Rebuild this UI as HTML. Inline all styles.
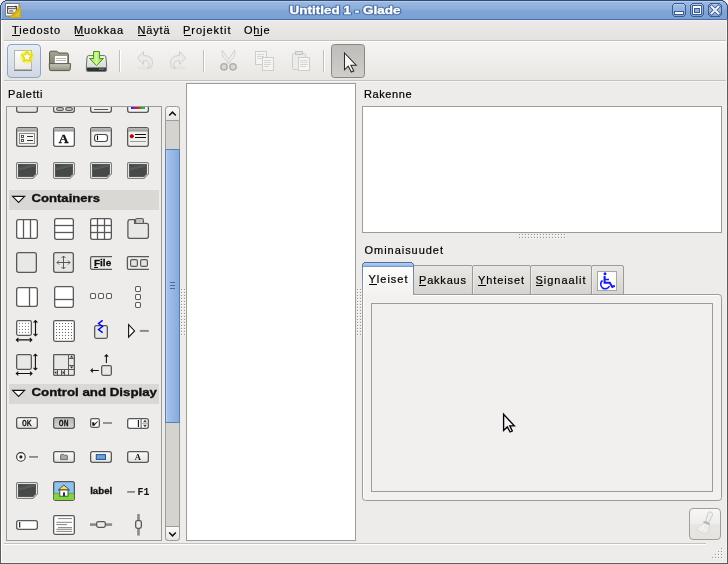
<!DOCTYPE html>
<html><head><meta charset="utf-8">
<style>
html,body{margin:0;padding:0;width:728px;height:564px;overflow:hidden;background:#f6f2ec;}
svg{display:block;will-change:transform;}
svg{font-family:"Liberation Sans",sans-serif;}
</style></head><body>
<svg width="728" height="564" viewBox="0 0 728 564" shape-rendering="crispEdges">
<defs>
<linearGradient id="gTitle" x1="0" y1="0" x2="0" y2="1">
<stop offset="0" stop-color="#9cbae4"/><stop offset="0.45" stop-color="#8cadda"/><stop offset="0.55" stop-color="#80a4d5"/><stop offset="1" stop-color="#79a0d5"/>
</linearGradient>
<linearGradient id="gMenu" x1="0" y1="0" x2="0" y2="1">
<stop offset="0" stop-color="#ebeae8"/><stop offset="1" stop-color="#e3e2df"/>
</linearGradient>
<linearGradient id="gTool" x1="0" y1="0" x2="0" y2="1">
<stop offset="0" stop-color="#f5f4f2"/><stop offset="1" stop-color="#e8e7e4"/>
</linearGradient>
<linearGradient id="gTab" x1="0" y1="0" x2="0" y2="1">
<stop offset="0" stop-color="#e9e8e5"/><stop offset="1" stop-color="#d5d4d0"/>
</linearGradient>
<linearGradient id="gSlider" x1="0" y1="0" x2="1" y2="0">
<stop offset="0" stop-color="#a9c5ea"/><stop offset="1" stop-color="#84aadc"/>
</linearGradient>
<linearGradient id="gBtn" x1="0" y1="0" x2="0" y2="1">
<stop offset="0" stop-color="#fbfbfa"/><stop offset="1" stop-color="#e6e5e2"/>
</linearGradient>
</defs>
<!-- window bg -->
<rect x="0" y="20" width="728" height="544" fill="#edecea"/>
<!-- title bar -->
<path d="M5,0 H723 L728,5 V20 H0 V5 Z" fill="url(#gTitle)"/>
<rect x="5" y="0" width="718" height="1" fill="#34496c"/>
<rect x="3" y="1" width="2" height="1" fill="#34496c"/><rect x="723" y="1" width="2" height="1" fill="#34496c"/>
<rect x="2" y="2" width="1" height="1" fill="#34496c"/><rect x="725" y="2" width="1" height="1" fill="#34496c"/>
<rect x="1" y="3" width="1" height="2" fill="#34496c"/><rect x="726" y="3" width="1" height="2" fill="#34496c"/>
<rect x="0" y="5" width="1" height="15" fill="#34496c"/><rect x="727" y="5" width="1" height="15" fill="#34496c"/>
<rect x="5" y="1" width="718" height="1" fill="#b4ccef"/>
<rect x="1" y="5" width="1" height="14" fill="#a9c3ea"/>
<rect x="0" y="19" width="728" height="1" fill="#4a72a8"/>

<!-- window side borders -->
<rect x="0" y="20" width="1" height="544" fill="#5e5c59"/>
<rect x="1" y="20" width="1" height="543" fill="#ffffff"/>
<rect x="727" y="20" width="1" height="544" fill="#5e5c59"/>
<rect x="726" y="20" width="1" height="543" fill="#f4f3f1"/>
<rect x="0" y="563" width="728" height="1" fill="#5e5c59"/>
<rect x="1" y="562" width="726" height="1" fill="#f4f3f1"/>
<!-- menubar -->
<rect x="2" y="20" width="724" height="1" fill="#f3efee"/>
<rect x="4" y="21" width="722" height="19" fill="url(#gMenu)"/>
<rect x="4" y="40" width="722" height="1" fill="#c4c2bf"/>
<rect x="4" y="41" width="722" height="1" fill="#ffffff"/>
<g font-size="11" fill="#000" stroke="#000" stroke-width="0.2">
<text x="12.0" y="34" textLength="48.0" lengthAdjust="spacing">Tiedosto</text>
<text x="74.0" y="34" textLength="49.0" lengthAdjust="spacing">Muokkaa</text>
<text x="137.5" y="34" textLength="32.0" lengthAdjust="spacing">Näytä</text>
<text x="183.0" y="34" textLength="47.5" lengthAdjust="spacing">Projektit</text>
<text x="244.0" y="34" textLength="25.5" lengthAdjust="spacing">Ohje</text>
</g>
<!-- toolbar -->
<rect x="4" y="42" width="722" height="38" fill="url(#gTool)"/>
<rect x="4" y="80" width="722" height="1" fill="#c4c2bf"/>
<rect x="4" y="81" width="722" height="1" fill="#f6f5f3"/>
<!-- labels -->
<g font-size="11" fill="#000" stroke="#000" stroke-width="0.2">
<text x="8.0" y="98" textLength="34.5" lengthAdjust="spacing">Paletti</text>
<text x="364.0" y="98" textLength="47.5" lengthAdjust="spacing">Rakenne</text>
<text x="364.5" y="254" textLength="78.5" lengthAdjust="spacing">Ominaisuudet</text>
</g>
<!-- palette frame -->
<rect x="6.5" y="106.5" width="155" height="434" fill="none" stroke="#9d9b98" stroke-width="1"/>
<!-- scrollbar -->
<rect x="165.5" y="106.5" width="14" height="434" rx="3" fill="#d4d3d0" stroke="#9d9b98" shape-rendering="auto"/>
<!-- design area -->
<rect x="186.5" y="83.5" width="169" height="457" fill="#ffffff" stroke="#9d9b98"/>
<!-- tree view -->
<rect x="362.5" y="106.5" width="359" height="126" fill="#ffffff" stroke="#9d9b98"/>
<!-- notebook page -->
<rect x="362.5" y="294.5" width="359" height="206" rx="3" fill="#f2f1ef" stroke="#9d9b98" shape-rendering="auto"/><rect x="363" y="296" width="1" height="202" fill="#ffffff"/>
<rect x="371.5" y="303.5" width="341" height="188" fill="#f1f0ee" stroke="#9d9b98"/>
<!-- broom button -->

<!-- statusbar -->
<rect x="4" y="543" width="702" height="1" fill="#c4c2bf"/>
<rect x="4" y="544" width="702" height="1" fill="#ffffff"/>

<!-- toolbar buttons -->
<g shape-rendering="auto">
<!-- new (prelight) -->
<linearGradient id="gPre" x1="0" y1="0" x2="0" y2="1"><stop offset="0" stop-color="#e9edf2"/><stop offset="1" stop-color="#d1d8e2"/></linearGradient>
<linearGradient id="gPage" x1="0" y1="0" x2="0" y2="1"><stop offset="0" stop-color="#ffffff"/><stop offset="1" stop-color="#e9e9e7"/></linearGradient>
<radialGradient id="gGlow"><stop offset="0.5" stop-color="#f2ee3a"/><stop offset="1" stop-color="#f2ee3a" stop-opacity="0"/></radialGradient>
<rect x="7.5" y="44.5" width="33" height="33" rx="3.5" fill="url(#gPre)" stroke="#8ca5c9"/>
<rect x="14" y="69.5" width="18" height="1.5" fill="#6a6a68" opacity="0.8"/>
<rect x="14.5" y="50.5" width="17" height="19" fill="url(#gPage)" stroke="#b4b4b0"/>
<circle cx="27" cy="56.8" r="8" fill="url(#gGlow)"/>
<path d="M27.00,51.20 L28.53,54.70 L32.33,55.07 L29.47,57.60 L30.29,61.33 L27.00,59.40 L23.71,61.33 L24.53,57.60 L21.67,55.07 L25.47,54.70 Z" fill="#ffffff" stroke="#e6d200" stroke-width="1.2" stroke-linejoin="round"/>
<!-- open -->
<linearGradient id="gFolB" x1="0" y1="0" x2="0" y2="1"><stop offset="0" stop-color="#a2a390"/><stop offset="1" stop-color="#787968"/></linearGradient>
<linearGradient id="gFolF" x1="0" y1="0" x2="0" y2="1"><stop offset="0" stop-color="#c9cab9"/><stop offset="1" stop-color="#8f907d"/></linearGradient>
<path d="M49.5,69 V52.8 Q49.5,51.2 51,51.2 H56.4 Q57.4,51.2 58,52 L58.6,53 H66.8 Q68.4,53 68.4,54.6 V69 Z" fill="url(#gFolB)" stroke="#5b5c4f"/>
<rect x="54.5" y="55.5" width="13" height="9" fill="#fdfdfc" stroke="#8a8a86" stroke-width="0.8"/>
<path d="M56,58.5h10M56,60.5h10" stroke="#b8b8b4" stroke-width="1"/>
<path d="M49.2,63.6 H70.6 L70.2,69.4 Q70,70.6 68.8,70.6 H50.8 Q49.6,70.6 49.5,69.4 Z" fill="url(#gFolF)" stroke="#5b5c4f"/>
<!-- save -->
<linearGradient id="gDrv" x1="0" y1="0" x2="0" y2="1"><stop offset="0" stop-color="#f6f6f4"/><stop offset="1" stop-color="#cfcfcb"/></linearGradient>
<linearGradient id="gArr" x1="0" y1="0" x2="1" y2="0"><stop offset="0" stop-color="#8ae234"/><stop offset="0.5" stop-color="#d2f6a8"/><stop offset="1" stop-color="#73d216"/></linearGradient>
<path d="M88.6,55.6 H104.4 Q105.6,55.6 105.9,57 L106.6,65 V70.2 Q106.6,71.4 105.4,71.4 H87.6 Q86.4,71.4 86.4,70.2 V65 L87.1,57 Q87.4,55.6 88.6,55.6 Z" fill="url(#gDrv)" stroke="#6c6e6a"/>
<path d="M87,67.4 H106 V70 Q106,70.9 105.1,70.9 H87.9 Q87,70.9 87,70 Z" fill="#2e3436"/>
<rect x="99" y="68.6" width="5.5" height="1" fill="#8a8c88"/>
<path d="M93.5,51.5 H99.5 V58.5 H103.5 L96.5,65.6 L89.5,58.5 H93.5 Z" fill="url(#gArr)" stroke="#4e9a06"/>
<!-- separators -->
<rect x="119" y="50" width="1" height="22" fill="#c0bfbc"/><rect x="120" y="50" width="1" height="22" fill="#ffffff"/>
<rect x="203" y="50" width="1" height="22" fill="#c0bfbc"/><rect x="204" y="50" width="1" height="22" fill="#ffffff"/>
<rect x="323" y="50" width="1" height="22" fill="#c0bfbc"/><rect x="324" y="50" width="1" height="22" fill="#ffffff"/>
<!-- undo -->
<ellipse cx="145" cy="68" rx="8" ry="2" fill="#e6e5e2"/>
<path d="M137.5,58 L143.5,51.5 V55.5 Q152.5,55.5 152.5,62.5 Q152.5,67.5 147.5,68.5 Q150,66 149,63 Q148,60.5 143.5,60.5 V64.5 Z" fill="#ebebe8" stroke="#cfcfca"/>
<!-- redo -->
<ellipse cx="178" cy="68" rx="8" ry="2" fill="#e6e5e2"/>
<path d="M185.5,58 L179.5,51.5 V55.5 Q170.5,55.5 170.5,62.5 Q170.5,67.5 175.5,68.5 Q173,66 174,63 Q175,60.5 179.5,60.5 V64.5 Z" fill="#ebebe8" stroke="#cfcfca"/>
<!-- cut -->
<path d="M222.3,50.3 Q221.2,54 223.5,57.5 L229.2,63.5 L230.2,62 Z" fill="#efefed" stroke="#c9c9c5" stroke-width="0.8"/>
<path d="M234.7,50.3 Q235.8,54 233.5,57.5 L227.8,63.5 L226.8,62 Z" fill="#efefed" stroke="#c9c9c5" stroke-width="0.8"/>
<circle cx="224" cy="66.8" r="3.1" fill="none" stroke="#b2acaa" stroke-width="1.5"/>
<circle cx="233" cy="66.8" r="3.1" fill="none" stroke="#b2acaa" stroke-width="1.5"/>
<circle cx="224" cy="66.8" r="1.3" fill="none" stroke="#bdb8b6" stroke-width="0.7"/>
<circle cx="233" cy="66.8" r="1.3" fill="none" stroke="#bdb8b6" stroke-width="0.7"/>
<!-- copy -->
<rect x="255.5" y="51.5" width="11" height="13" fill="#f4f4f2" stroke="#cdcdc9"/>
<rect x="262.5" y="57.5" width="11" height="13" fill="#f4f4f2" stroke="#cdcdc9"/>
<path d="M257,54.5h7M257,56.5h7M257,58.5h5M264,60.5h7M264,62.5h7M264,64.5h7M264,66.5h5" stroke="#d6d6d2" stroke-width="1"/>
<!-- paste -->
<rect x="292.5" y="53.5" width="13" height="16" rx="1" fill="#ececea" stroke="#cdcdc9"/>
<rect x="295.5" y="51.5" width="7" height="3" fill="#e2e2df" stroke="#c5c5c1"/>
<rect x="298.5" y="57.5" width="11" height="13" fill="#f6f6f4" stroke="#cdcdc9"/>
<path d="M300,60.5h8M300,62.5h8M300,64.5h8M300,66.5h6" stroke="#d6d6d2" stroke-width="1"/>
<!-- pointer (active) -->
<linearGradient id="gPtr" x1="0" y1="0" x2="0" y2="1"><stop offset="0" stop-color="#bebcb8"/><stop offset="1" stop-color="#d0cec9"/></linearGradient>
<rect x="331.5" y="44.5" width="33" height="33" rx="3" fill="url(#gPtr)" stroke="#8a8884"/>
<path d="M344.5,53 V69.8 L348.3,66.2 L351.3,72 L353.8,70.9 L350.9,65.2 L356.2,65.2 Z" fill="#f8f8f8" stroke="#2a2a2a" stroke-width="1.05" stroke-linejoin="miter"/>
</g>

<!-- title icon -->
<g shape-rendering="auto">
<rect x="5.5" y="3.5" width="13.5" height="12.5" fill="#ffffff" stroke="#7d7d7a"/>
<rect x="7.6" y="6.6" width="9" height="6.6" fill="none" stroke="#4a4a48" stroke-width="1.1"/>
<rect x="7.6" y="8.2" width="9" height="1" fill="#4a4a48"/>
<path d="M15.5,5.2 L17.3,6.6 L15.5,8" fill="#4a4a48"/>
<rect x="9.2" y="10.2" width="4" height="1.5" fill="#777"/>
<path d="M9.2,17.6 L20.6,17.6 L20.6,5.8 Z" fill="#d4ac16" stroke="#c69d08" stroke-width="0.7"/>
<path d="M13.8,16.2 L19.3,16.2 L19.3,10.5 Z" fill="#e3c02c"/>
<path d="M11.2,16.9 H19.9 V8" fill="none" stroke="#f4dc70" stroke-width="0.7" stroke-dasharray="1.2,1.6"/>
</g>
<!-- title text -->
<g font-size="11" font-weight="bold">
<text x="289.5" y="14" textLength="111" lengthAdjust="spacingAndGlyphs" fill="none" stroke="#3d5f94" stroke-width="2.4" stroke-linejoin="round" opacity="0.75">Untitled 1 - Glade</text>
<text x="289.5" y="14" textLength="111" lengthAdjust="spacingAndGlyphs" fill="#ffffff" stroke="#ffffff" stroke-width="0.3">Untitled 1 - Glade</text>
</g>
<!-- wm buttons -->
<linearGradient id="gWm" x1="0" y1="0" x2="0" y2="1"><stop offset="0" stop-color="#a4bfe8"/><stop offset="1" stop-color="#82a6da"/></linearGradient>
<rect x="673" y="4" width="12" height="12" fill="url(#gWm)"/><rect x="674" y="3" width="10" height="1" fill="#3d5d90"/><rect x="674" y="16" width="10" height="1" fill="#3d5d90"/><rect x="672" y="5" width="1" height="10" fill="#3d5d90"/><rect x="685" y="5" width="1" height="10" fill="#3d5d90"/><rect x="673" y="4" width="1" height="1" fill="#3d5d90"/><rect x="684" y="4" width="1" height="1" fill="#3d5d90"/><rect x="673" y="15" width="1" height="1" fill="#3d5d90"/><rect x="684" y="15" width="1" height="1" fill="#3d5d90"/><rect x="674" y="4" width="10" height="1" fill="#b9d0f0" opacity="0.8"/><rect x="674" y="11" width="10" height="4" fill="#3d5d90"/><rect x="675" y="12" width="8" height="2" fill="#ffffff"/><rect x="691" y="4" width="12" height="12" fill="url(#gWm)"/><rect x="692" y="3" width="10" height="1" fill="#3d5d90"/><rect x="692" y="16" width="10" height="1" fill="#3d5d90"/><rect x="690" y="5" width="1" height="10" fill="#3d5d90"/><rect x="703" y="5" width="1" height="10" fill="#3d5d90"/><rect x="691" y="4" width="1" height="1" fill="#3d5d90"/><rect x="702" y="4" width="1" height="1" fill="#3d5d90"/><rect x="691" y="15" width="1" height="1" fill="#3d5d90"/><rect x="702" y="15" width="1" height="1" fill="#3d5d90"/><rect x="692" y="4" width="10" height="1" fill="#b9d0f0" opacity="0.8"/><rect x="692" y="5" width="10" height="10" fill="#3d5d90"/><rect x="693" y="6" width="8" height="8" fill="#ffffff"/><rect x="694" y="8" width="6" height="5" fill="#3d5d90"/><rect x="695" y="9" width="4" height="3" fill="#8fb0de"/><rect x="709" y="4" width="12" height="12" fill="url(#gWm)"/><rect x="710" y="3" width="10" height="1" fill="#3d5d90"/><rect x="710" y="16" width="10" height="1" fill="#3d5d90"/><rect x="708" y="5" width="1" height="10" fill="#3d5d90"/><rect x="721" y="5" width="1" height="10" fill="#3d5d90"/><rect x="709" y="4" width="1" height="1" fill="#3d5d90"/><rect x="720" y="4" width="1" height="1" fill="#3d5d90"/><rect x="709" y="15" width="1" height="1" fill="#3d5d90"/><rect x="720" y="15" width="1" height="1" fill="#3d5d90"/><rect x="710" y="4" width="10" height="1" fill="#b9d0f0" opacity="0.8"/><g shape-rendering="auto"><path d="M711.5,6.5 L718.5,13.5 M718.5,6.5 L711.5,13.5" stroke="#3d5d90" stroke-width="3.6" stroke-linecap="square"/><path d="M711.5,6.5 L718.5,13.5 M718.5,6.5 L711.5,13.5" stroke="#ffffff" stroke-width="1.9" stroke-linecap="square"/><rect x="714" y="9" width="2" height="2" fill="#dde6f4"/></g>

<!--PALETTE--><g shape-rendering="geometricPrecision">
<clipPath id="clipPal"><rect x="7" y="107" width="154" height="433"/></clipPath>
<g clip-path="url(#clipPal)">
<rect x="16.65" y="92.65" width="20.7" height="19.7" rx="2" fill="#e6e6e4" stroke="#595959" stroke-width="1.3"/>
<rect x="53.65" y="92.65" width="20.7" height="19.7" rx="2" fill="#f0f0ee" stroke="#595959" stroke-width="1.3"/>
<rect x="56.6" y="107.6" width="6.8" height="2.8" rx="2" fill="#e6e6e4" stroke="#595959" stroke-width="1.2"/>
<rect x="65.6" y="107.6" width="6.8" height="2.8" rx="2" fill="#e6e6e4" stroke="#595959" stroke-width="1.2"/>
<rect x="90.65" y="92.65" width="20.7" height="19.7" rx="2" fill="#f0f0ee" stroke="#595959" stroke-width="1.3"/>
<path d="M94,109.5 L108,109.5" stroke="#555" stroke-width="1" fill="none"/>
<rect x="127.65" y="92.65" width="20.7" height="19.7" rx="2" fill="#f0f0ee" stroke="#595959" stroke-width="1.3"/>
<linearGradient id="gRain" x1="0" x2="1"><stop offset="0" stop-color="#2020e0"/><stop offset="0.3" stop-color="#a020a0"/><stop offset="0.55" stop-color="#e02020"/><stop offset="0.8" stop-color="#20c020"/><stop offset="1" stop-color="#20a0a0"/></linearGradient>
<rect x="131" y="107" width="14" height="2" fill="url(#gRain)"/>
<rect x="16.65" y="127.65" width="20.7" height="18.7" rx="2" fill="#f0f0ee" stroke="#595959" stroke-width="1.3"/><rect x="17.2" y="128.2" width="19.6" height="2.6" fill="#b0b0ae"/><path d="M16.8,131 L37.2,131" stroke="#777" stroke-width="0.8" fill="none"/>
<rect x="19.5" y="133.5" width="15" height="10" rx="0" fill="#f6f6f4" stroke="#8a8a88" stroke-width="1"/>
<rect x="21.5" y="135.5" width="2" height="2" fill="#fff" stroke="#444" stroke-width="0.9"/>
<rect x="21.5" y="139.5" width="2" height="2" fill="#fff" stroke="#444" stroke-width="0.9"/>
<path d="M27,136.5 L33,136.5" stroke="#333" stroke-width="1" fill="none"/>
<path d="M27,140.5 L33,140.5" stroke="#333" stroke-width="1" fill="none"/>
<rect x="53.65" y="127.65" width="20.7" height="18.7" rx="2" fill="#ffffff" stroke="#595959" stroke-width="1.3"/><rect x="54.2" y="128.2" width="19.6" height="2.6" fill="#b0b0ae"/><path d="M53.8,131 L74.2,131" stroke="#777" stroke-width="0.8" fill="none"/>
<text x="63.6" y="143.2" font-family="Liberation Serif" font-weight="bold" font-size="13.5" text-anchor="middle" fill="#111" stroke="#111" stroke-width="0.3">A</text>
<rect x="90.65" y="127.65" width="20.7" height="18.7" rx="2" fill="#f0f0ee" stroke="#595959" stroke-width="1.3"/><rect x="91.2" y="128.2" width="19.6" height="2.6" fill="#b0b0ae"/><path d="M90.8,131 L111.2,131" stroke="#777" stroke-width="0.8" fill="none"/>
<rect x="94.55" y="134.55" width="12.9" height="6.9" rx="2.5" fill="#fff" stroke="#444" stroke-width="1.1"/>
<path d="M97.5,135.5 L97.5,140.2" stroke="#111" stroke-width="1.1" fill="none"/>
<rect x="127.65" y="127.65" width="20.7" height="18.7" rx="2" fill="#f0f0ee" stroke="#595959" stroke-width="1.3"/><rect x="128.2" y="128.2" width="19.6" height="2.6" fill="#b0b0ae"/><path d="M127.8,131 L148.2,131" stroke="#777" stroke-width="0.8" fill="none"/>
<circle cx="131.8" cy="136.2" r="1.8" fill="#c00000" stroke="#800" stroke-width="0.5"/>
<path d="M135,134.5 L146,134.5" stroke="#111" stroke-width="1" fill="none"/>
<path d="M135,137.5 L146,137.5" stroke="#111" stroke-width="1" fill="none"/>
<path d="M130,141.5 L146,141.5" stroke="#999" stroke-width="1" fill="none"/>
<rect x="16.6" y="162.6" width="20.8" height="15.8" rx="1.2" fill="#fff" stroke="#7e7e7b" stroke-width="1.2"/><linearGradient id="gImg16162" x1="0" y1="0" x2="0.35" y2="1"><stop offset="0" stop-color="#3a3d3d"/><stop offset="0.42" stop-color="#5a5e5e"/><stop offset="0.47" stop-color="#474948"/><stop offset="1" stop-color="#474947"/></linearGradient><rect x="18.4" y="164.4" width="17.2" height="12.2" fill="url(#gImg16162)" stroke="#3a3a3a" stroke-width="0.7"/><path d="M38.2,173.4 L32.6,179.2 L38.2,179.2 Z" fill="#edecea"/><path d="M37.6,174 L33.2,178.4 Q33.4,174.4 37.6,174 Z" fill="#cfcfc8" stroke="#8a8a86" stroke-width="0.8"/>
<rect x="53.6" y="162.6" width="20.8" height="15.8" rx="1.2" fill="#fff" stroke="#7e7e7b" stroke-width="1.2"/><linearGradient id="gImg53162" x1="0" y1="0" x2="0.35" y2="1"><stop offset="0" stop-color="#3a3d3d"/><stop offset="0.42" stop-color="#5a5e5e"/><stop offset="0.47" stop-color="#474948"/><stop offset="1" stop-color="#474947"/></linearGradient><rect x="55.4" y="164.4" width="17.2" height="12.2" fill="url(#gImg53162)" stroke="#3a3a3a" stroke-width="0.7"/><path d="M75.2,173.4 L69.6,179.2 L75.2,179.2 Z" fill="#edecea"/><path d="M74.6,174 L70.2,178.4 Q70.4,174.4 74.6,174 Z" fill="#cfcfc8" stroke="#8a8a86" stroke-width="0.8"/>
<rect x="90.6" y="162.6" width="20.8" height="15.8" rx="1.2" fill="#fff" stroke="#7e7e7b" stroke-width="1.2"/><linearGradient id="gImg90162" x1="0" y1="0" x2="0.35" y2="1"><stop offset="0" stop-color="#3a3d3d"/><stop offset="0.42" stop-color="#5a5e5e"/><stop offset="0.47" stop-color="#474948"/><stop offset="1" stop-color="#474947"/></linearGradient><rect x="92.4" y="164.4" width="17.2" height="12.2" fill="url(#gImg90162)" stroke="#3a3a3a" stroke-width="0.7"/><path d="M112.2,173.4 L106.6,179.2 L112.2,179.2 Z" fill="#edecea"/><path d="M111.6,174 L107.2,178.4 Q107.4,174.4 111.6,174 Z" fill="#cfcfc8" stroke="#8a8a86" stroke-width="0.8"/>
<rect x="127.6" y="162.6" width="20.8" height="15.8" rx="1.2" fill="#fff" stroke="#7e7e7b" stroke-width="1.2"/><linearGradient id="gImg127162" x1="0" y1="0" x2="0.35" y2="1"><stop offset="0" stop-color="#3a3d3d"/><stop offset="0.42" stop-color="#5a5e5e"/><stop offset="0.47" stop-color="#474948"/><stop offset="1" stop-color="#474947"/></linearGradient><rect x="129.4" y="164.4" width="17.2" height="12.2" fill="url(#gImg127162)" stroke="#3a3a3a" stroke-width="0.7"/><path d="M149.2,173.4 L143.6,179.2 L149.2,179.2 Z" fill="#edecea"/><path d="M148.6,174 L144.2,178.4 Q144.4,174.4 148.6,174 Z" fill="#cfcfc8" stroke="#8a8a86" stroke-width="0.8"/>
<rect x="9" y="190" width="150" height="20" fill="#d9d8d5" shape-rendering="crispEdges"/><path d="M12.6,196.4 H24.6 L18.6,202.4 Z" fill="#fff" stroke="#111" stroke-width="1.1"/><text x="31.5" y="202" font-size="11" font-weight="bold" fill="#111" stroke="#111" stroke-width="0.35" textLength="68.5" lengthAdjust="spacingAndGlyphs">Containers</text>
<rect x="9" y="384" width="150" height="20" fill="#d9d8d5" shape-rendering="crispEdges"/><path d="M12.6,390.4 H24.6 L18.6,396.4 Z" fill="#fff" stroke="#111" stroke-width="1.1"/><text x="31.5" y="396" font-size="11" font-weight="bold" fill="#111" stroke="#111" stroke-width="0.35" textLength="125.5" lengthAdjust="spacingAndGlyphs">Control and Display</text>
<rect x="16.65" y="219.65" width="20.7" height="18.7" rx="2" fill="#fff" stroke="#595959" stroke-width="1.3"/>
<path d="M23.5,219.5 L23.5,238.5" stroke="#595959" stroke-width="1.3" fill="none"/>
<path d="M30.5,219.5 L30.5,238.5" stroke="#595959" stroke-width="1.3" fill="none"/>
<rect x="54.65" y="218.65" width="18.7" height="20.7" rx="2" fill="#fff" stroke="#595959" stroke-width="1.3"/>
<path d="M54.5,225.5 L73.5,225.5" stroke="#595959" stroke-width="1.3" fill="none"/>
<path d="M54.5,232.5 L73.5,232.5" stroke="#595959" stroke-width="1.3" fill="none"/>
<rect x="90.65" y="218.65" width="20.7" height="20.7" rx="2" fill="#fff" stroke="#595959" stroke-width="1.3"/>
<path d="M97.5,218.5 L97.5,239.5" stroke="#595959" stroke-width="1.3" fill="none"/>
<path d="M104.5,218.5 L104.5,239.5" stroke="#595959" stroke-width="1.3" fill="none"/>
<path d="M90.5,225.5 L111.5,225.5" stroke="#595959" stroke-width="1.3" fill="none"/>
<path d="M90.5,232.5 L111.5,232.5" stroke="#595959" stroke-width="1.3" fill="none"/>
<path d="M127.9,222.4 Q127.9,219.6 130,219.6 H134.6 V223.4 H146.5 Q148.4,223.4 148.4,225.4 V236.6 Q148.4,238.4 146.5,238.4 H129.8 Q127.9,238.4 127.9,236.6 Z" fill="#e8e8e6" stroke="#595959" stroke-width="1.3"/>
<rect x="135.55" y="218.55" width="7.9" height="4.9" rx="1.5" fill="#c4c4c2" stroke="#595959" stroke-width="1.1"/>
<rect x="16.65" y="252.65" width="19.7" height="19.7" rx="2" fill="#e8e8e6" stroke="#595959" stroke-width="1.3"/>
<rect x="53.65" y="252.65" width="19.7" height="19.7" rx="2" fill="#e6e6e4" stroke="#595959" stroke-width="1.3"/>
<g stroke="#595959" stroke-width="1" fill="none"><path d="M57,262.5 H70 M63.5,256 V269"/><path d="M59,260.5 L57,262.5 L59,264.5 M68,260.5 L70,262.5 L68,264.5 M61.5,258 L63.5,256 L65.5,258 M61.5,267 L63.5,269 L65.5,267"/></g>
<path d="M112,256.6 H92 Q90.6,256.6 90.6,258 V268 Q90.6,269.4 92,269.4 H112" fill="none" stroke="#595959" stroke-width="1.3"/>
<text x="94" y="266" font-size="9.6" font-weight="bold" fill="#111" stroke="#111" stroke-width="0.3" textLength="17.2" lengthAdjust="spacingAndGlyphs">File</text>
<path d="M94,267.5 L98,267.5" stroke="#111" stroke-width="1" fill="none"/>
<path d="M149,256.6 H128.6 Q127.4,256.6 127.4,258 V268 Q127.4,269.4 128.6,269.4 H149" fill="none" stroke="#595959" stroke-width="1.3"/>
<rect x="130.6" y="259.6" width="6.8" height="6.8" rx="1.5" fill="#e4e4e2" stroke="#595959" stroke-width="1.2"/>
<rect x="140.6" y="259.6" width="6.8" height="6.8" rx="1.5" fill="#e4e4e2" stroke="#595959" stroke-width="1.2"/>
<rect x="16.65" y="287.65" width="20.7" height="18.7" rx="2" fill="#fff" stroke="#595959" stroke-width="1.3"/>
<path d="M29.5,287.5 L29.5,306.5" stroke="#595959" stroke-width="1.3" fill="none"/>
<rect x="54.65" y="286.65" width="18.7" height="20.7" rx="2" fill="#fff" stroke="#595959" stroke-width="1.3"/>
<path d="M54.5,299.5 L73.5,299.5" stroke="#595959" stroke-width="1.3" fill="none"/>
<rect x="90.55" y="293.55" width="4.9" height="4.9" rx="1.2" fill="#fff" stroke="#595959" stroke-width="1.1"/>
<rect x="98.55" y="293.55" width="4.9" height="4.9" rx="1.2" fill="#fff" stroke="#595959" stroke-width="1.1"/>
<rect x="106.55" y="293.55" width="4.9" height="4.9" rx="1.2" fill="#fff" stroke="#595959" stroke-width="1.1"/>
<rect x="135.55" y="286.55" width="4.9" height="4.9" rx="1.2" fill="#fff" stroke="#595959" stroke-width="1.1"/>
<rect x="135.55" y="294.55" width="4.9" height="4.9" rx="1.2" fill="#fff" stroke="#595959" stroke-width="1.1"/>
<rect x="135.55" y="302.55" width="4.9" height="4.9" rx="1.2" fill="#fff" stroke="#595959" stroke-width="1.1"/>
<rect x="16.65" y="320.65" width="14.7" height="14.7" rx="1.5" fill="#fff" stroke="#595959" stroke-width="1.3"/>
<rect x="18.9" y="322.9" width="1" height="1" fill="#666"/>
<rect x="18.9" y="325.9" width="1" height="1" fill="#666"/>
<rect x="18.9" y="328.9" width="1" height="1" fill="#666"/>
<rect x="18.9" y="331.9" width="1" height="1" fill="#666"/>
<rect x="21.9" y="322.9" width="1" height="1" fill="#666"/>
<rect x="21.9" y="325.9" width="1" height="1" fill="#666"/>
<rect x="21.9" y="328.9" width="1" height="1" fill="#666"/>
<rect x="21.9" y="331.9" width="1" height="1" fill="#666"/>
<rect x="24.9" y="322.9" width="1" height="1" fill="#666"/>
<rect x="24.9" y="325.9" width="1" height="1" fill="#666"/>
<rect x="24.9" y="328.9" width="1" height="1" fill="#666"/>
<rect x="24.9" y="331.9" width="1" height="1" fill="#666"/>
<rect x="27.9" y="322.9" width="1" height="1" fill="#666"/>
<rect x="27.9" y="325.9" width="1" height="1" fill="#666"/>
<rect x="27.9" y="328.9" width="1" height="1" fill="#666"/>
<rect x="27.9" y="331.9" width="1" height="1" fill="#666"/>
<g stroke="#111" stroke-width="1.1" fill="none"><path d="M35.5,320.6 V335.8 M33.6,322.6 L35.5,320.6 L37.4,322.6 M33.6,333.8 L35.5,335.8 L37.4,333.8"/><path d="M16.4,339.9 H31.8 M18.4,338 L16.4,339.9 L18.4,341.8 M29.8,338 L31.8,339.9 L29.8,341.8"/></g>
<rect x="53.65" y="320.65" width="20.7" height="20.7" rx="1.5" fill="#fff" stroke="#595959" stroke-width="1.3"/>
<rect x="56" y="323" width="1" height="1" fill="#666"/>
<rect x="56" y="326" width="1" height="1" fill="#666"/>
<rect x="56" y="329" width="1" height="1" fill="#666"/>
<rect x="56" y="332" width="1" height="1" fill="#666"/>
<rect x="56" y="335" width="1" height="1" fill="#666"/>
<rect x="56" y="338" width="1" height="1" fill="#666"/>
<rect x="59" y="323" width="1" height="1" fill="#666"/>
<rect x="59" y="326" width="1" height="1" fill="#666"/>
<rect x="59" y="329" width="1" height="1" fill="#666"/>
<rect x="59" y="332" width="1" height="1" fill="#666"/>
<rect x="59" y="335" width="1" height="1" fill="#666"/>
<rect x="59" y="338" width="1" height="1" fill="#666"/>
<rect x="62" y="323" width="1" height="1" fill="#666"/>
<rect x="62" y="326" width="1" height="1" fill="#666"/>
<rect x="62" y="329" width="1" height="1" fill="#666"/>
<rect x="62" y="332" width="1" height="1" fill="#666"/>
<rect x="62" y="335" width="1" height="1" fill="#666"/>
<rect x="62" y="338" width="1" height="1" fill="#666"/>
<rect x="65" y="323" width="1" height="1" fill="#666"/>
<rect x="65" y="326" width="1" height="1" fill="#666"/>
<rect x="65" y="329" width="1" height="1" fill="#666"/>
<rect x="65" y="332" width="1" height="1" fill="#666"/>
<rect x="65" y="335" width="1" height="1" fill="#666"/>
<rect x="65" y="338" width="1" height="1" fill="#666"/>
<rect x="68" y="323" width="1" height="1" fill="#666"/>
<rect x="68" y="326" width="1" height="1" fill="#666"/>
<rect x="68" y="329" width="1" height="1" fill="#666"/>
<rect x="68" y="332" width="1" height="1" fill="#666"/>
<rect x="68" y="335" width="1" height="1" fill="#666"/>
<rect x="68" y="338" width="1" height="1" fill="#666"/>
<rect x="71" y="323" width="1" height="1" fill="#666"/>
<rect x="71" y="326" width="1" height="1" fill="#666"/>
<rect x="71" y="329" width="1" height="1" fill="#666"/>
<rect x="71" y="332" width="1" height="1" fill="#666"/>
<rect x="71" y="335" width="1" height="1" fill="#666"/>
<rect x="71" y="338" width="1" height="1" fill="#666"/>
<rect x="94.65" y="325.65" width="12.7" height="12.7" rx="1.5" fill="#e8e8e6" stroke="#595959" stroke-width="1.3"/>
<path d="M102.6,320.4 L98.5,323.5 L102.5,326.5 L98.5,329.5 L102.6,332.6" fill="none" stroke="#0000f0" stroke-width="1.4" stroke-linejoin="miter"/>
<path d="M128.6,324.6 L134.6,330.9 L128.6,337.2 Z" fill="#fff" stroke="#111" stroke-width="1.1"/>
<path d="M139.8,330.9 L148.8,330.9" stroke="#8a8a88" stroke-width="2" fill="none"/>
<rect x="16.65" y="354.65" width="14.7" height="14.7" rx="1.5" fill="#e8e8e6" stroke="#595959" stroke-width="1.3"/>
<g stroke="#111" stroke-width="1.1" fill="none"><path d="M35.4,354.2 V369.8 M33.5,356.2 L35.4,354.2 L37.3,356.2 M33.5,367.8 L35.4,369.8 L37.3,367.8"/><path d="M16.3,373.5 H32 M18.3,371.6 L16.3,373.5 L18.3,375.4 M30,371.6 L32,373.5 L30,375.4"/></g>
<rect x="53.65" y="354.65" width="20.7" height="20.7" rx="0.8" fill="#e8e8e6" stroke="#595959" stroke-width="1.3"/>
<g stroke="#595959" stroke-width="1" fill="none" shape-rendering="crispEdges"><path d="M68.5,354.5 V375.5 M53.5,369.5 H74.5 M68.5,358.5 H74.5 M68.5,365.5 H74.5 M57.5,369.5 V375.5 M61.5,369.5 V375.5 M64.5,369.5 V375.5"/></g>
<g fill="#222"><path d="M70,357.6 L71.6,355.6 L73.2,357.6 Z"/><path d="M70,366.6 L71.6,368.6 L73.2,366.6 Z"/><path d="M56.4,371 L54.6,372.6 L56.4,374.2 Z"/><path d="M62.6,371 L64.4,372.6 L62.6,374.2 Z"/></g>
<rect x="101.65" y="365.65" width="9.7" height="9.7" rx="1.5" fill="#e8e8e6" stroke="#595959" stroke-width="1.3"/>
<g stroke="#111" stroke-width="1.1" fill="none"><path d="M106.4,354.8 V363 M104.6,356.6 L106.4,354.8 L108.2,356.6"/><path d="M91,370.5 H98.8 M92.8,368.7 L91,370.5 L92.8,372.3"/></g>
<linearGradient id="gBt" x1="0" y1="0" x2="0" y2="1"><stop offset="0" stop-color="#fcfcfb"/><stop offset="1" stop-color="#e2e2e0"/></linearGradient>
<linearGradient id="gBtOn" x1="0" y1="0" x2="0" y2="1"><stop offset="0" stop-color="#b8b8b6"/><stop offset="1" stop-color="#d6d6d4"/></linearGradient>
<rect x="16.65" y="417.65" width="20.7" height="10.7" rx="2" fill="url(#gBt)" stroke="#595959" stroke-width="1.3"/>
<text x="22" y="425.8" font-family="Liberation Mono" font-size="9" fill="#111" stroke="#111" stroke-width="0.35" textLength="9.6" lengthAdjust="spacingAndGlyphs">OK</text>
<rect x="53.65" y="417.65" width="20.7" height="10.7" rx="2" fill="url(#gBtOn)" stroke="#595959" stroke-width="1.3"/>
<text x="58.8" y="425.8" font-family="Liberation Mono" font-size="9" fill="#111" stroke="#111" stroke-width="0.35" textLength="9.7" lengthAdjust="spacingAndGlyphs">ON</text>
<rect x="90.65" y="418.65" width="8.7" height="8.7" rx="1.5" fill="#fff" stroke="#595959" stroke-width="1.3"/>
<path d="M92.2,422.2 L94.2,422.2 L94.3,423.9 L97.6,421 L97.9,421.6 L94.3,425.8 L92.4,425.8 Z" fill="#111"/>
<path d="M103,423 L112,423" stroke="#8a8a86" stroke-width="1.8" fill="none"/>
<rect x="127.65" y="418.65" width="20.7" height="9.7" rx="2" fill="#fff" stroke="#595959" stroke-width="1.3"/>
<path d="M141.1,418.5 L141.1,428.5" stroke="#595959" stroke-width="1" fill="none"/>
<path d="M138.4,420 L138.4,427" stroke="#111" stroke-width="1.1" fill="none"/>
<path d="M141.5,423.5 L148.5,423.5" stroke="#999" stroke-width="0.7" fill="none"/>
<g fill="#444"><path d="M143,422.2 L145,419.8 L147,422.2 Z"/><path d="M143,424.8 L145,427.2 L147,424.8 Z"/></g>
<circle cx="20.9" cy="456.9" r="4.3" fill="#fff" stroke="#333" stroke-width="1.1"/>
<circle cx="20.9" cy="456.9" r="1.6" fill="#222"/>
<path d="M29.1,456.9 L38,456.9" stroke="#8a8a88" stroke-width="1.8" fill="none"/>
<rect x="53.65" y="451.65" width="20.7" height="10.7" rx="2" fill="url(#gBt)" stroke="#595959" stroke-width="1.3"/>
<path d="M60.6,455.2 Q60.6,454.4 61.4,454.4 H63.6 L64.4,455.2 H66.6 Q67.4,455.2 67.4,456 V459.6 H60.6 Z" fill="#a9a9a7" stroke="#555" stroke-width="0.8"/>
<rect x="90.65" y="451.65" width="20.7" height="10.7" rx="2" fill="url(#gBt)" stroke="#595959" stroke-width="1.3"/>
<rect x="96.3" y="454.6" width="9.2" height="4.8" fill="#729fcf" stroke="#2050a0" stroke-width="1"/>
<rect x="127.65" y="451.65" width="20.7" height="10.7" rx="2" fill="url(#gBt)" stroke="#595959" stroke-width="1.3"/>
<text x="137.8" y="460" font-family="Liberation Serif" font-weight="bold" font-size="8.5" text-anchor="middle" fill="#111">A</text>
<rect x="16.6" y="482.6" width="20.8" height="15.8" rx="1.2" fill="#fff" stroke="#7e7e7b" stroke-width="1.2"/><linearGradient id="gImg16482" x1="0" y1="0" x2="0.35" y2="1"><stop offset="0" stop-color="#3a3d3d"/><stop offset="0.42" stop-color="#5a5e5e"/><stop offset="0.47" stop-color="#474948"/><stop offset="1" stop-color="#474947"/></linearGradient><rect x="18.4" y="484.4" width="17.2" height="12.2" fill="url(#gImg16482)" stroke="#3a3a3a" stroke-width="0.7"/><path d="M38.2,493.4 L32.6,499.2 L38.2,499.2 Z" fill="#edecea"/><path d="M37.6,494 L33.2,498.4 Q33.4,494.4 37.6,494 Z" fill="#cfcfc8" stroke="#8a8a86" stroke-width="0.8"/>
<rect x="53.65" y="481.65" width="20.7" height="18.7" rx="2" fill="#8ec4f4" stroke="#595959" stroke-width="1.3"/>
<rect x="53.8" y="493.4" width="20.2" height="6.6" fill="#7fd63c"/>
<path d="M53.7,493.4 L74.1,493.4" stroke="#4a8a2a" stroke-width="0.6" fill="none"/>
<path d="M58.2,490 L63.9,485 L69.6,490 Z" fill="#f2e050" stroke="#444" stroke-width="0.9"/>
<rect x="59.8" y="490" width="8.2" height="6.2" fill="#fff" stroke="#444" stroke-width="0.9"/>
<rect x="63" y="492.4" width="2" height="3.8" fill="#333"/>
<text x="90.2" y="494.3" font-size="9.5" font-weight="bold" fill="#111" stroke="#111" stroke-width="0.3" textLength="22" lengthAdjust="spacingAndGlyphs">label</text>
<path d="M127.2,491.9 L135,491.9" stroke="#8a8a88" stroke-width="1.8" fill="none"/>
<text x="137.6" y="494.6" font-family="Liberation Mono" font-size="10.5" font-weight="bold" fill="#111" textLength="11.8" lengthAdjust="spacingAndGlyphs">F1</text>
<rect x="16.65" y="520.65" width="20.7" height="8.7" rx="2" fill="#fff" stroke="#595959" stroke-width="1.3"/>
<path d="M19.7,522 L19.7,527.6" stroke="#111" stroke-width="1.1" fill="none"/>
<rect x="53.65" y="515.65" width="20.7" height="18.7" rx="1.5" fill="#fff" stroke="#595959" stroke-width="1.3"/>
<path d="M58,518.6 L72,518.6" stroke="#777" stroke-width="0.9" fill="none"/>
<path d="M56.3,522.3 L72,522.3" stroke="#777" stroke-width="0.9" fill="none"/>
<path d="M56.3,524.6 L67,524.6" stroke="#777" stroke-width="0.9" fill="none"/>
<path d="M58,527.6 L72,527.6" stroke="#777" stroke-width="0.9" fill="none"/>
<path d="M56.3,529.3 L72,529.3" stroke="#777" stroke-width="0.9" fill="none"/>
<path d="M56.3,531.4 L72,531.4" stroke="#777" stroke-width="0.9" fill="none"/>
<path d="M90,524.6 L112.1,524.6" stroke="#8a8a88" stroke-width="2.6" fill="none"/>
<rect x="96.65" y="521.65" width="8.7" height="5.7" rx="1.8" fill="#ececea" stroke="#595959" stroke-width="1.3"/>
<path d="M138.5,514 L138.5,535.6" stroke="#8a8a88" stroke-width="2.6" fill="none"/>
<rect x="135.65" y="520.65" width="5.7" height="7.7" rx="1.8" fill="#ececea" stroke="#595959" stroke-width="1.3"/>
</g>
</g><!--/PALETTE-->
<!--EXTRA-->
<!-- scrollbar details -->
<g shape-rendering="auto">
<path d="M165.5,120.5 V109.5 Q165.5,106.5 168.5,106.5 H176.5 Q179.5,106.5 179.5,109.5 V120.5 Z" fill="url(#gBtn)" stroke="#9d9b98"/>
<path d="M169.2,115.6 L172.5,112.2 L175.8,115.6" fill="none" stroke="#111" stroke-width="1.5"/>
<path d="M165.5,526.5 V537.5 Q165.5,540.5 168.5,540.5 H176.5 Q179.5,540.5 179.5,537.5 V526.5 Z" fill="url(#gBtn)" stroke="#9d9b98"/>
<path d="M169.2,532.4 L172.5,535.8 L175.8,532.4" fill="none" stroke="#111" stroke-width="1.5"/>
</g>
<rect x="165.5" y="149.5" width="14" height="273" fill="url(#gSlider)" stroke="#5a7fb3"/>
<rect x="166" y="150" width="1" height="272" fill="#bcd2f0"/>
<rect x="170" y="282" width="5" height="1" fill="#4b6b9a"/>
<rect x="170" y="285" width="5" height="1" fill="#4b6b9a"/>
<rect x="170" y="288" width="5" height="1" fill="#4b6b9a"/>
<rect x="181" y="289" width="1" height="1" fill="#9a9895"/><rect x="182" y="290" width="1" height="1" fill="#ffffff"/><rect x="184" y="289" width="1" height="1" fill="#9a9895"/><rect x="185" y="290" width="1" height="1" fill="#ffffff"/><rect x="357" y="289" width="1" height="1" fill="#9a9895"/><rect x="358" y="290" width="1" height="1" fill="#ffffff"/><rect x="360" y="289" width="1" height="1" fill="#9a9895"/><rect x="361" y="290" width="1" height="1" fill="#ffffff"/><rect x="181" y="292" width="1" height="1" fill="#9a9895"/><rect x="182" y="293" width="1" height="1" fill="#ffffff"/><rect x="184" y="292" width="1" height="1" fill="#9a9895"/><rect x="185" y="293" width="1" height="1" fill="#ffffff"/><rect x="357" y="292" width="1" height="1" fill="#9a9895"/><rect x="358" y="293" width="1" height="1" fill="#ffffff"/><rect x="360" y="292" width="1" height="1" fill="#9a9895"/><rect x="361" y="293" width="1" height="1" fill="#ffffff"/><rect x="181" y="295" width="1" height="1" fill="#9a9895"/><rect x="182" y="296" width="1" height="1" fill="#ffffff"/><rect x="184" y="295" width="1" height="1" fill="#9a9895"/><rect x="185" y="296" width="1" height="1" fill="#ffffff"/><rect x="357" y="295" width="1" height="1" fill="#9a9895"/><rect x="358" y="296" width="1" height="1" fill="#ffffff"/><rect x="360" y="295" width="1" height="1" fill="#9a9895"/><rect x="361" y="296" width="1" height="1" fill="#ffffff"/><rect x="181" y="298" width="1" height="1" fill="#9a9895"/><rect x="182" y="299" width="1" height="1" fill="#ffffff"/><rect x="184" y="298" width="1" height="1" fill="#9a9895"/><rect x="185" y="299" width="1" height="1" fill="#ffffff"/><rect x="357" y="298" width="1" height="1" fill="#9a9895"/><rect x="358" y="299" width="1" height="1" fill="#ffffff"/><rect x="360" y="298" width="1" height="1" fill="#9a9895"/><rect x="361" y="299" width="1" height="1" fill="#ffffff"/><rect x="181" y="301" width="1" height="1" fill="#9a9895"/><rect x="182" y="302" width="1" height="1" fill="#ffffff"/><rect x="184" y="301" width="1" height="1" fill="#9a9895"/><rect x="185" y="302" width="1" height="1" fill="#ffffff"/><rect x="357" y="301" width="1" height="1" fill="#9a9895"/><rect x="358" y="302" width="1" height="1" fill="#ffffff"/><rect x="360" y="301" width="1" height="1" fill="#9a9895"/><rect x="361" y="302" width="1" height="1" fill="#ffffff"/><rect x="181" y="304" width="1" height="1" fill="#9a9895"/><rect x="182" y="305" width="1" height="1" fill="#ffffff"/><rect x="184" y="304" width="1" height="1" fill="#9a9895"/><rect x="185" y="305" width="1" height="1" fill="#ffffff"/><rect x="357" y="304" width="1" height="1" fill="#9a9895"/><rect x="358" y="305" width="1" height="1" fill="#ffffff"/><rect x="360" y="304" width="1" height="1" fill="#9a9895"/><rect x="361" y="305" width="1" height="1" fill="#ffffff"/><rect x="181" y="307" width="1" height="1" fill="#9a9895"/><rect x="182" y="308" width="1" height="1" fill="#ffffff"/><rect x="184" y="307" width="1" height="1" fill="#9a9895"/><rect x="185" y="308" width="1" height="1" fill="#ffffff"/><rect x="357" y="307" width="1" height="1" fill="#9a9895"/><rect x="358" y="308" width="1" height="1" fill="#ffffff"/><rect x="360" y="307" width="1" height="1" fill="#9a9895"/><rect x="361" y="308" width="1" height="1" fill="#ffffff"/><rect x="181" y="310" width="1" height="1" fill="#9a9895"/><rect x="182" y="311" width="1" height="1" fill="#ffffff"/><rect x="184" y="310" width="1" height="1" fill="#9a9895"/><rect x="185" y="311" width="1" height="1" fill="#ffffff"/><rect x="357" y="310" width="1" height="1" fill="#9a9895"/><rect x="358" y="311" width="1" height="1" fill="#ffffff"/><rect x="360" y="310" width="1" height="1" fill="#9a9895"/><rect x="361" y="311" width="1" height="1" fill="#ffffff"/><rect x="181" y="313" width="1" height="1" fill="#9a9895"/><rect x="182" y="314" width="1" height="1" fill="#ffffff"/><rect x="184" y="313" width="1" height="1" fill="#9a9895"/><rect x="185" y="314" width="1" height="1" fill="#ffffff"/><rect x="357" y="313" width="1" height="1" fill="#9a9895"/><rect x="358" y="314" width="1" height="1" fill="#ffffff"/><rect x="360" y="313" width="1" height="1" fill="#9a9895"/><rect x="361" y="314" width="1" height="1" fill="#ffffff"/><rect x="181" y="316" width="1" height="1" fill="#9a9895"/><rect x="182" y="317" width="1" height="1" fill="#ffffff"/><rect x="184" y="316" width="1" height="1" fill="#9a9895"/><rect x="185" y="317" width="1" height="1" fill="#ffffff"/><rect x="357" y="316" width="1" height="1" fill="#9a9895"/><rect x="358" y="317" width="1" height="1" fill="#ffffff"/><rect x="360" y="316" width="1" height="1" fill="#9a9895"/><rect x="361" y="317" width="1" height="1" fill="#ffffff"/><rect x="181" y="319" width="1" height="1" fill="#9a9895"/><rect x="182" y="320" width="1" height="1" fill="#ffffff"/><rect x="184" y="319" width="1" height="1" fill="#9a9895"/><rect x="185" y="320" width="1" height="1" fill="#ffffff"/><rect x="357" y="319" width="1" height="1" fill="#9a9895"/><rect x="358" y="320" width="1" height="1" fill="#ffffff"/><rect x="360" y="319" width="1" height="1" fill="#9a9895"/><rect x="361" y="320" width="1" height="1" fill="#ffffff"/><rect x="181" y="322" width="1" height="1" fill="#9a9895"/><rect x="182" y="323" width="1" height="1" fill="#ffffff"/><rect x="184" y="322" width="1" height="1" fill="#9a9895"/><rect x="185" y="323" width="1" height="1" fill="#ffffff"/><rect x="357" y="322" width="1" height="1" fill="#9a9895"/><rect x="358" y="323" width="1" height="1" fill="#ffffff"/><rect x="360" y="322" width="1" height="1" fill="#9a9895"/><rect x="361" y="323" width="1" height="1" fill="#ffffff"/><rect x="181" y="325" width="1" height="1" fill="#9a9895"/><rect x="182" y="326" width="1" height="1" fill="#ffffff"/><rect x="184" y="325" width="1" height="1" fill="#9a9895"/><rect x="185" y="326" width="1" height="1" fill="#ffffff"/><rect x="357" y="325" width="1" height="1" fill="#9a9895"/><rect x="358" y="326" width="1" height="1" fill="#ffffff"/><rect x="360" y="325" width="1" height="1" fill="#9a9895"/><rect x="361" y="326" width="1" height="1" fill="#ffffff"/><rect x="181" y="328" width="1" height="1" fill="#9a9895"/><rect x="182" y="329" width="1" height="1" fill="#ffffff"/><rect x="184" y="328" width="1" height="1" fill="#9a9895"/><rect x="185" y="329" width="1" height="1" fill="#ffffff"/><rect x="357" y="328" width="1" height="1" fill="#9a9895"/><rect x="358" y="329" width="1" height="1" fill="#ffffff"/><rect x="360" y="328" width="1" height="1" fill="#9a9895"/><rect x="361" y="329" width="1" height="1" fill="#ffffff"/><rect x="181" y="331" width="1" height="1" fill="#9a9895"/><rect x="182" y="332" width="1" height="1" fill="#ffffff"/><rect x="184" y="331" width="1" height="1" fill="#9a9895"/><rect x="185" y="332" width="1" height="1" fill="#ffffff"/><rect x="357" y="331" width="1" height="1" fill="#9a9895"/><rect x="358" y="332" width="1" height="1" fill="#ffffff"/><rect x="360" y="331" width="1" height="1" fill="#9a9895"/><rect x="361" y="332" width="1" height="1" fill="#ffffff"/><rect x="181" y="334" width="1" height="1" fill="#9a9895"/><rect x="182" y="335" width="1" height="1" fill="#ffffff"/><rect x="184" y="334" width="1" height="1" fill="#9a9895"/><rect x="185" y="335" width="1" height="1" fill="#ffffff"/><rect x="357" y="334" width="1" height="1" fill="#9a9895"/><rect x="358" y="335" width="1" height="1" fill="#ffffff"/><rect x="360" y="334" width="1" height="1" fill="#9a9895"/><rect x="361" y="335" width="1" height="1" fill="#ffffff"/><rect x="519" y="234" width="1" height="1" fill="#9a9895"/><rect x="520" y="235" width="1" height="1" fill="#ffffff"/><rect x="519" y="237" width="1" height="1" fill="#9a9895"/><rect x="520" y="238" width="1" height="1" fill="#ffffff"/><rect x="522" y="234" width="1" height="1" fill="#9a9895"/><rect x="523" y="235" width="1" height="1" fill="#ffffff"/><rect x="522" y="237" width="1" height="1" fill="#9a9895"/><rect x="523" y="238" width="1" height="1" fill="#ffffff"/><rect x="525" y="234" width="1" height="1" fill="#9a9895"/><rect x="526" y="235" width="1" height="1" fill="#ffffff"/><rect x="525" y="237" width="1" height="1" fill="#9a9895"/><rect x="526" y="238" width="1" height="1" fill="#ffffff"/><rect x="528" y="234" width="1" height="1" fill="#9a9895"/><rect x="529" y="235" width="1" height="1" fill="#ffffff"/><rect x="528" y="237" width="1" height="1" fill="#9a9895"/><rect x="529" y="238" width="1" height="1" fill="#ffffff"/><rect x="531" y="234" width="1" height="1" fill="#9a9895"/><rect x="532" y="235" width="1" height="1" fill="#ffffff"/><rect x="531" y="237" width="1" height="1" fill="#9a9895"/><rect x="532" y="238" width="1" height="1" fill="#ffffff"/><rect x="534" y="234" width="1" height="1" fill="#9a9895"/><rect x="535" y="235" width="1" height="1" fill="#ffffff"/><rect x="534" y="237" width="1" height="1" fill="#9a9895"/><rect x="535" y="238" width="1" height="1" fill="#ffffff"/><rect x="537" y="234" width="1" height="1" fill="#9a9895"/><rect x="538" y="235" width="1" height="1" fill="#ffffff"/><rect x="537" y="237" width="1" height="1" fill="#9a9895"/><rect x="538" y="238" width="1" height="1" fill="#ffffff"/><rect x="540" y="234" width="1" height="1" fill="#9a9895"/><rect x="541" y="235" width="1" height="1" fill="#ffffff"/><rect x="540" y="237" width="1" height="1" fill="#9a9895"/><rect x="541" y="238" width="1" height="1" fill="#ffffff"/><rect x="543" y="234" width="1" height="1" fill="#9a9895"/><rect x="544" y="235" width="1" height="1" fill="#ffffff"/><rect x="543" y="237" width="1" height="1" fill="#9a9895"/><rect x="544" y="238" width="1" height="1" fill="#ffffff"/><rect x="546" y="234" width="1" height="1" fill="#9a9895"/><rect x="547" y="235" width="1" height="1" fill="#ffffff"/><rect x="546" y="237" width="1" height="1" fill="#9a9895"/><rect x="547" y="238" width="1" height="1" fill="#ffffff"/><rect x="549" y="234" width="1" height="1" fill="#9a9895"/><rect x="550" y="235" width="1" height="1" fill="#ffffff"/><rect x="549" y="237" width="1" height="1" fill="#9a9895"/><rect x="550" y="238" width="1" height="1" fill="#ffffff"/><rect x="552" y="234" width="1" height="1" fill="#9a9895"/><rect x="553" y="235" width="1" height="1" fill="#ffffff"/><rect x="552" y="237" width="1" height="1" fill="#9a9895"/><rect x="553" y="238" width="1" height="1" fill="#ffffff"/><rect x="555" y="234" width="1" height="1" fill="#9a9895"/><rect x="556" y="235" width="1" height="1" fill="#ffffff"/><rect x="555" y="237" width="1" height="1" fill="#9a9895"/><rect x="556" y="238" width="1" height="1" fill="#ffffff"/><rect x="558" y="234" width="1" height="1" fill="#9a9895"/><rect x="559" y="235" width="1" height="1" fill="#ffffff"/><rect x="558" y="237" width="1" height="1" fill="#9a9895"/><rect x="559" y="238" width="1" height="1" fill="#ffffff"/><rect x="561" y="234" width="1" height="1" fill="#9a9895"/><rect x="562" y="235" width="1" height="1" fill="#ffffff"/><rect x="561" y="237" width="1" height="1" fill="#9a9895"/><rect x="562" y="238" width="1" height="1" fill="#ffffff"/><rect x="564" y="234" width="1" height="1" fill="#9a9895"/><rect x="565" y="235" width="1" height="1" fill="#ffffff"/><rect x="564" y="237" width="1" height="1" fill="#9a9895"/><rect x="565" y="238" width="1" height="1" fill="#ffffff"/><rect x="718" y="551" width="1" height="1" fill="#9a9895"/><rect x="719" y="552" width="1" height="1" fill="#ffffff"/><rect x="721" y="551" width="1" height="1" fill="#9a9895"/><rect x="722" y="552" width="1" height="1" fill="#ffffff"/><rect x="715" y="554" width="1" height="1" fill="#9a9895"/><rect x="716" y="555" width="1" height="1" fill="#ffffff"/><rect x="718" y="554" width="1" height="1" fill="#9a9895"/><rect x="719" y="555" width="1" height="1" fill="#ffffff"/><rect x="721" y="554" width="1" height="1" fill="#9a9895"/><rect x="722" y="555" width="1" height="1" fill="#ffffff"/><rect x="712" y="557" width="1" height="1" fill="#9a9895"/><rect x="713" y="558" width="1" height="1" fill="#ffffff"/><rect x="715" y="557" width="1" height="1" fill="#9a9895"/><rect x="716" y="558" width="1" height="1" fill="#ffffff"/><rect x="718" y="557" width="1" height="1" fill="#9a9895"/><rect x="719" y="558" width="1" height="1" fill="#ffffff"/><rect x="721" y="557" width="1" height="1" fill="#9a9895"/><rect x="722" y="558" width="1" height="1" fill="#ffffff"/><rect x="721" y="548" width="1" height="1" fill="#9a9895"/><rect x="722" y="549" width="1" height="1" fill="#ffffff"/>
<!-- tabs -->
<linearGradient id="gActBorder" x1="0" y1="0" x2="0" y2="1"><stop offset="0" stop-color="#5a7db0"/><stop offset="1" stop-color="#9d9b98"/></linearGradient>
<linearGradient id="gActFill" x1="0" y1="0" x2="0" y2="1"><stop offset="0" stop-color="#fdfdfc"/><stop offset="1" stop-color="#f2f1ef"/></linearGradient>
<linearGradient id="gActBand" x1="0" y1="0" x2="0" y2="1"><stop offset="0" stop-color="#b0caeb"/><stop offset="1" stop-color="#91b2e2"/></linearGradient>
<g shape-rendering="auto">
<rect x="413.5" y="265.5" width="59" height="29" rx="1.5" fill="url(#gTab)" stroke="#9d9b98"/>
<rect x="472.5" y="265.5" width="58" height="29" rx="1.5" fill="url(#gTab)" stroke="#9d9b98"/>
<rect x="530.5" y="265.5" width="61" height="29" rx="1.5" fill="url(#gTab)" stroke="#9d9b98"/>
<rect x="591.5" y="265.5" width="32" height="29" rx="1.5" fill="url(#gTab)" stroke="#9d9b98"/>
</g>
<rect x="473" y="267" width="1" height="27" fill="#f0efed" opacity="0.7"/>
<rect x="531" y="267" width="1" height="27" fill="#f0efed" opacity="0.7"/>
<rect x="592" y="267" width="1" height="27" fill="#f0efed" opacity="0.7"/>
<rect x="414" y="294" width="305" height="1" fill="#9d9b98"/>
<rect x="363" y="295" width="356" height="1" fill="#ffffff"/>
<!-- active tab -->
<rect x="362" y="264" width="52" height="31" fill="url(#gActBorder)"/>
<rect x="363" y="267" width="50" height="29" fill="url(#gActFill)"/>
<rect x="363" y="267" width="1" height="28" fill="#ffffff"/>
<rect x="364" y="262" width="48" height="1" fill="#4a70a5"/>
<rect x="363" y="263" width="1" height="1" fill="#4a70a5"/><rect x="412" y="263" width="1" height="1" fill="#4a70a5"/>
<rect x="362" y="263" width="1" height="1" fill="#b8c6d8"/><rect x="413" y="263" width="1" height="1" fill="#b8c6d8"/>
<rect x="363" y="264" width="50" height="2" fill="url(#gActBand)"/>
<rect x="364" y="263" width="48" height="1" fill="#b0caeb"/>
<rect x="363" y="266" width="50" height="1" fill="#7b9cc8"/>
<rect x="362" y="295" width="1" height="5" fill="#9d9b98"/>
<rect x="363" y="295" width="50" height="1" fill="#f2f1ef"/>
<!-- accessibility icon -->
<rect x="597.5" y="271.5" width="19" height="19" fill="#ffffff" stroke="#a8a8a6"/>
<g shape-rendering="auto" fill="none" stroke="#1a1aee">
<circle cx="605" cy="273.8" r="1.5" fill="#1a1aee" stroke="none"/>
<path d="M604.6,276 V282.8 H609.8 L612.3,287 L614.8,285.8" stroke-width="2.1"/>
<path d="M604.5,279.5 H609" stroke-width="1.5"/>
<path d="M602.5,280.5 A4.6,4.6 0 1 0 609.5,286" stroke-width="1.6"/>
</g>
<!-- tab labels -->
<g font-size="11" fill="#000" stroke="#000" stroke-width="0.2">
<text x="368.5" y="283" textLength="39.0" lengthAdjust="spacing">Yleiset</text>
<text x="419.0" y="284" textLength="47.0" lengthAdjust="spacing">Pakkaus</text>
<text x="478.0" y="284" textLength="46.0" lengthAdjust="spacing">Yhteiset</text>
<text x="535.5" y="284" textLength="50.0" lengthAdjust="spacing">Signaalit</text>
</g>
<rect x="369" y="284" width="8" height="1" fill="#000"/>
<rect x="419" y="285" width="7" height="1" fill="#000"/>
<rect x="478" y="285" width="8" height="1" fill="#000"/>
<rect x="536" y="285" width="7" height="1" fill="#000"/>
<!-- menu underlines -->
<rect x="12" y="35" width="8" height="1" fill="#000"/>
<rect x="75" y="35" width="9" height="1" fill="#000"/>
<rect x="138" y="35" width="8" height="1" fill="#000"/>
<rect x="184" y="35" width="7" height="1" fill="#000"/>
<rect x="254" y="35" width="6" height="1" fill="#000"/>
<!-- broom -->
<g shape-rendering="auto">
<linearGradient id="gBroomBtn" x1="0" y1="0" x2="0" y2="1"><stop offset="0" stop-color="#f6f6f4"/><stop offset="0.5" stop-color="#efeeec"/><stop offset="0.52" stop-color="#e7e6e3"/><stop offset="1" stop-color="#e4e3e0"/></linearGradient>
<rect x="689.5" y="508.5" width="31" height="31" rx="3.5" fill="url(#gBroomBtn)" stroke="#a19f9c"/>
<path d="M709.8,511.8 Q713.2,512 712.3,515.5 L709.2,522.3 L705.6,521.2 L707.6,514.2 Q708.2,511.6 709.8,511.8 Z" fill="#eeeeea" stroke="#c2c2be" stroke-width="0.8"/>
<path d="M703.4,521.7 L709.8,524.3" stroke="#a9a9b6" stroke-width="1.7"/>
<path d="M703.2,522.8 L709.4,525.2 L708.4,532.2 Q706.2,534.2 703.6,533.2 L696.6,529.8 Q697.6,527.6 703.2,522.8 Z" fill="#f1f1ed" stroke="#d2d2ce" stroke-width="0.8"/>
<path d="M704,524 L699,530 M706,525 L702.5,532 M708,525.5 L705.5,533" stroke="#e0e0dc" stroke-width="0.6"/>
</g>
<!-- mouse cursor -->
<g shape-rendering="auto">
<path d="M503.6,414.2 V430.4 L507.3,426.9 L510.1,432 L512.3,431 L509.8,425.9 L514.3,425.9 Z" fill="#f6f6f6" stroke="#000" stroke-width="1.35" stroke-linejoin="miter"/>
</g>
<!--/EXTRA-->
</svg>
</body></html>
